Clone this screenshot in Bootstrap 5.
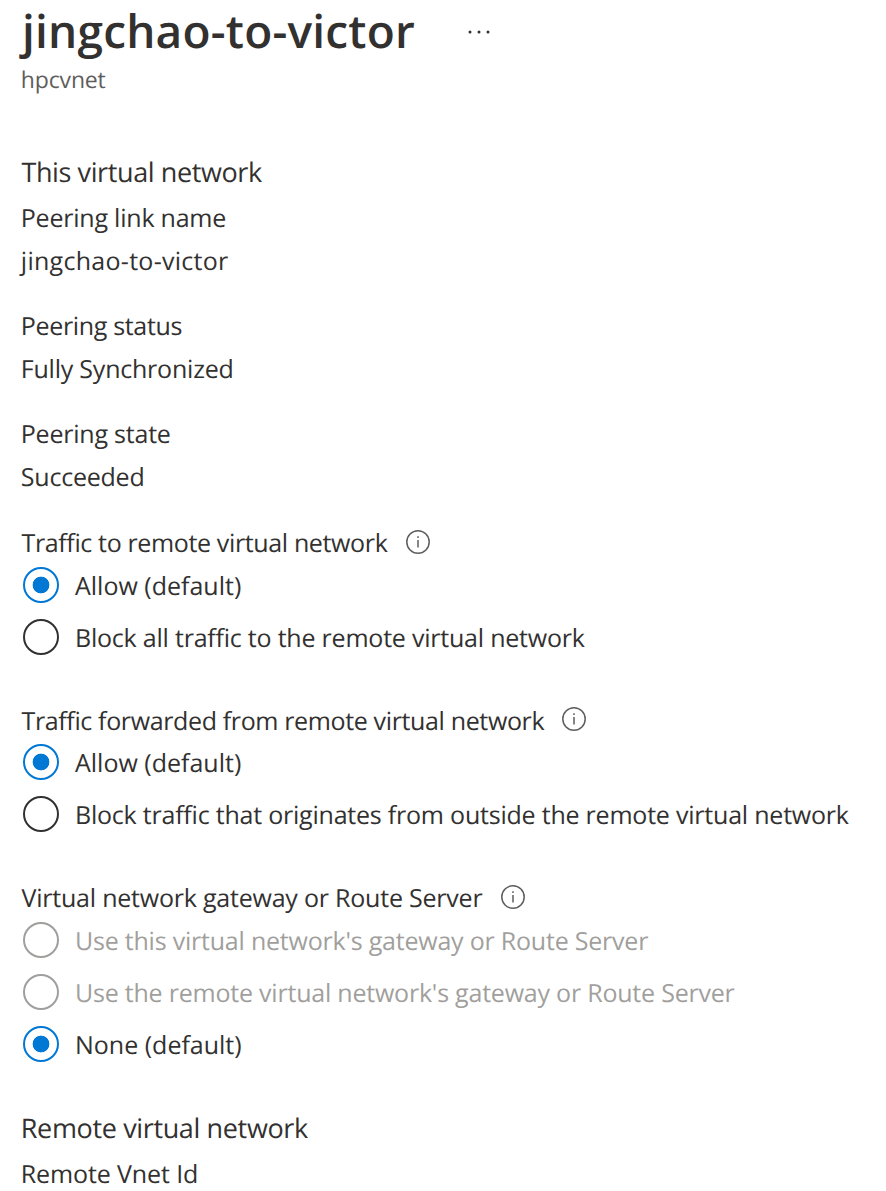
<!DOCTYPE html>
<html lang="en">
<head>
<meta charset="utf-8">
<meta name="viewport" content="width=device-width, initial-scale=1">
<title>jingchao-to-victor</title>
<link href="https://cdn.jsdelivr.net/npm/bootstrap@5.3.0/dist/css/bootstrap.min.css" rel="stylesheet">
<style>
  body { font-family: "Open Sans", "Noto Sans", sans-serif; font-size: 25px; line-height: 36px; color: #323130; background: #fff; text-rendering: geometricPrecision; }
  .blade { padding: 1px 0 0 20.8px; white-space: nowrap; }
  .blade-title { font-size: 46px; font-weight: 600; line-height: 60px; margin: 0 0 0 1.2px; letter-spacing: .2px; }
  .blade-sub { font-size: 23px; color: #605e5c; letter-spacing: -.15px; }
  .more { margin: 4px 0 0 52px; }
  .section-title { font-size: 27px; line-height: 36px; font-weight: 400; margin: 0 0 10px; }
  .pair { display: grid; row-gap: 7px; margin-bottom: 29px; }
  .inset-cap { padding-left: .7px; }
  .choices { display: grid; row-gap: 16px; margin: 7px 0 0 2.2px; }
  .choices .form-check { padding: 0; margin: 0; height: 36px; min-height: 36px; }
  .choices .form-check-input { flex: none; float: none; width: 36px; height: 36px; margin: -1px 16px 0 0; border: 2px solid #323130; background: #fff; }
  .choices .form-check-input:checked { border-color: #0078d4; background: radial-gradient(circle, #0078d4 8px, #fff 8.7px); }
  .choices .form-check-input:disabled { border-color: #a19f9d; opacity: 1; }
  .choices .form-check-input:disabled ~ .form-check-label { color: #a19f9d; opacity: 1; }
  .info { margin: -2px 0 0 18.5px; }
  .forwarded { margin-top: 47px; }
  .forwarded .info { margin: -4px 0 0 17.5px; }
  .forwarded .choices { margin-top: 6px; }
  .gap-group { margin-top: 47px; }
  .t0 { letter-spacing: -.12px; } .t1 { letter-spacing: -.22px; } .t2 { letter-spacing: -.215px; }
  .t3 { letter-spacing: -.33px; } .t4 { letter-spacing: -.36px; } .t5 { letter-spacing: -.4px; } .wide { letter-spacing: .28px; }
</style>
</head>
<body>
<svg class="d-none"><symbol id="info" viewBox="0 0 24 24"><circle cx="12" cy="12" r="11.2" fill="none" stroke="#605e5c" stroke-width="1.5"/><path d="M12 10v7.5M12 6.3v1.8" stroke="#605e5c" stroke-width="1.5"/></symbol></svg>
<main class="blade">
  <header>
    <div class="d-flex align-items-start">
      <h1 class="blade-title">jingchao-to-victor</h1>
      <svg class="more" width="24" height="54" viewBox="0 0 24 54" fill="#323130"><circle cx="3" cy="27" r="1.5"/><circle cx="12" cy="27" r="1.5"/><circle cx="21" cy="27" r="1.5"/></svg>
    </div>
    <div class="blade-sub">hpcvnet</div>
  </header>

  <section style="margin-top:57px">
    <h2 class="section-title t5 inset-cap">This virtual network</h2>
    <div class="pair"><span class="t1">Peering link name</span><span class="wide">jingchao-to-victor</span></div>
    <div class="pair"><span class="t3">Peering status</span><span class="t1">Fully Synchronized</span></div>
    <div class="pair mb-0"><span class="t1">Peering state</span><span class="t1">Succeeded</span></div>
  </section>

  <section style="margin-top:30px">
    <div class="d-flex align-items-center inset-cap"><span class="t4">Traffic to remote virtual network</span><svg class="info" width="24" height="24"><use href="#info"/></svg></div>
    <div class="choices">
      <div class="form-check d-flex"><input class="form-check-input" type="radio" name="out" id="o1" checked><label class="form-check-label" for="o1">Allow (default)</label></div>
      <div class="form-check d-flex"><input class="form-check-input" type="radio" name="out" id="o2"><label class="form-check-label t2" for="o2">Block all traffic to the remote virtual network</label></div>
    </div>
  </section>

  <section class="forwarded">
    <div class="d-flex align-items-center inset-cap"><span class="t4">Traffic forwarded from remote virtual network</span><svg class="info" width="24" height="24"><use href="#info"/></svg></div>
    <div class="choices">
      <div class="form-check d-flex"><input class="form-check-input" type="radio" name="fwd" id="f1" checked><label class="form-check-label" for="f1">Allow (default)</label></div>
      <div class="form-check d-flex"><input class="form-check-input" type="radio" name="fwd" id="f2"><label class="form-check-label t2" for="f2">Block traffic that originates from outside the remote virtual network</label></div>
    </div>
  </section>

  <section class="gap-group">
    <div class="d-flex align-items-center inset-cap"><span class="t2">Virtual network gateway or Route Server</span><svg class="info" width="24" height="24"><use href="#info"/></svg></div>
    <div class="choices">
      <div class="form-check d-flex"><input class="form-check-input" type="radio" name="gw" id="g1" disabled><label class="form-check-label t2" for="g1">Use this virtual network's gateway or Route Server</label></div>
      <div class="form-check d-flex"><input class="form-check-input" type="radio" name="gw" id="g2" disabled><label class="form-check-label t2" for="g2">Use the remote virtual network's gateway or Route Server</label></div>
      <div class="form-check d-flex"><input class="form-check-input" type="radio" name="gw" id="g3" checked><label class="form-check-label" for="g3">None (default)</label></div>
    </div>
  </section>

  <section class="gap-group">
    <h2 class="section-title t4">Remote virtual network</h2>
    <div class="t0" style="line-height:35px;padding-top:.5px;height:35px">Remote Vnet Id</div>
  </section>
</main>
<script src="https://cdn.jsdelivr.net/npm/bootstrap@5.3.0/dist/js/bootstrap.bundle.min.js"></script>
</body>
</html>
